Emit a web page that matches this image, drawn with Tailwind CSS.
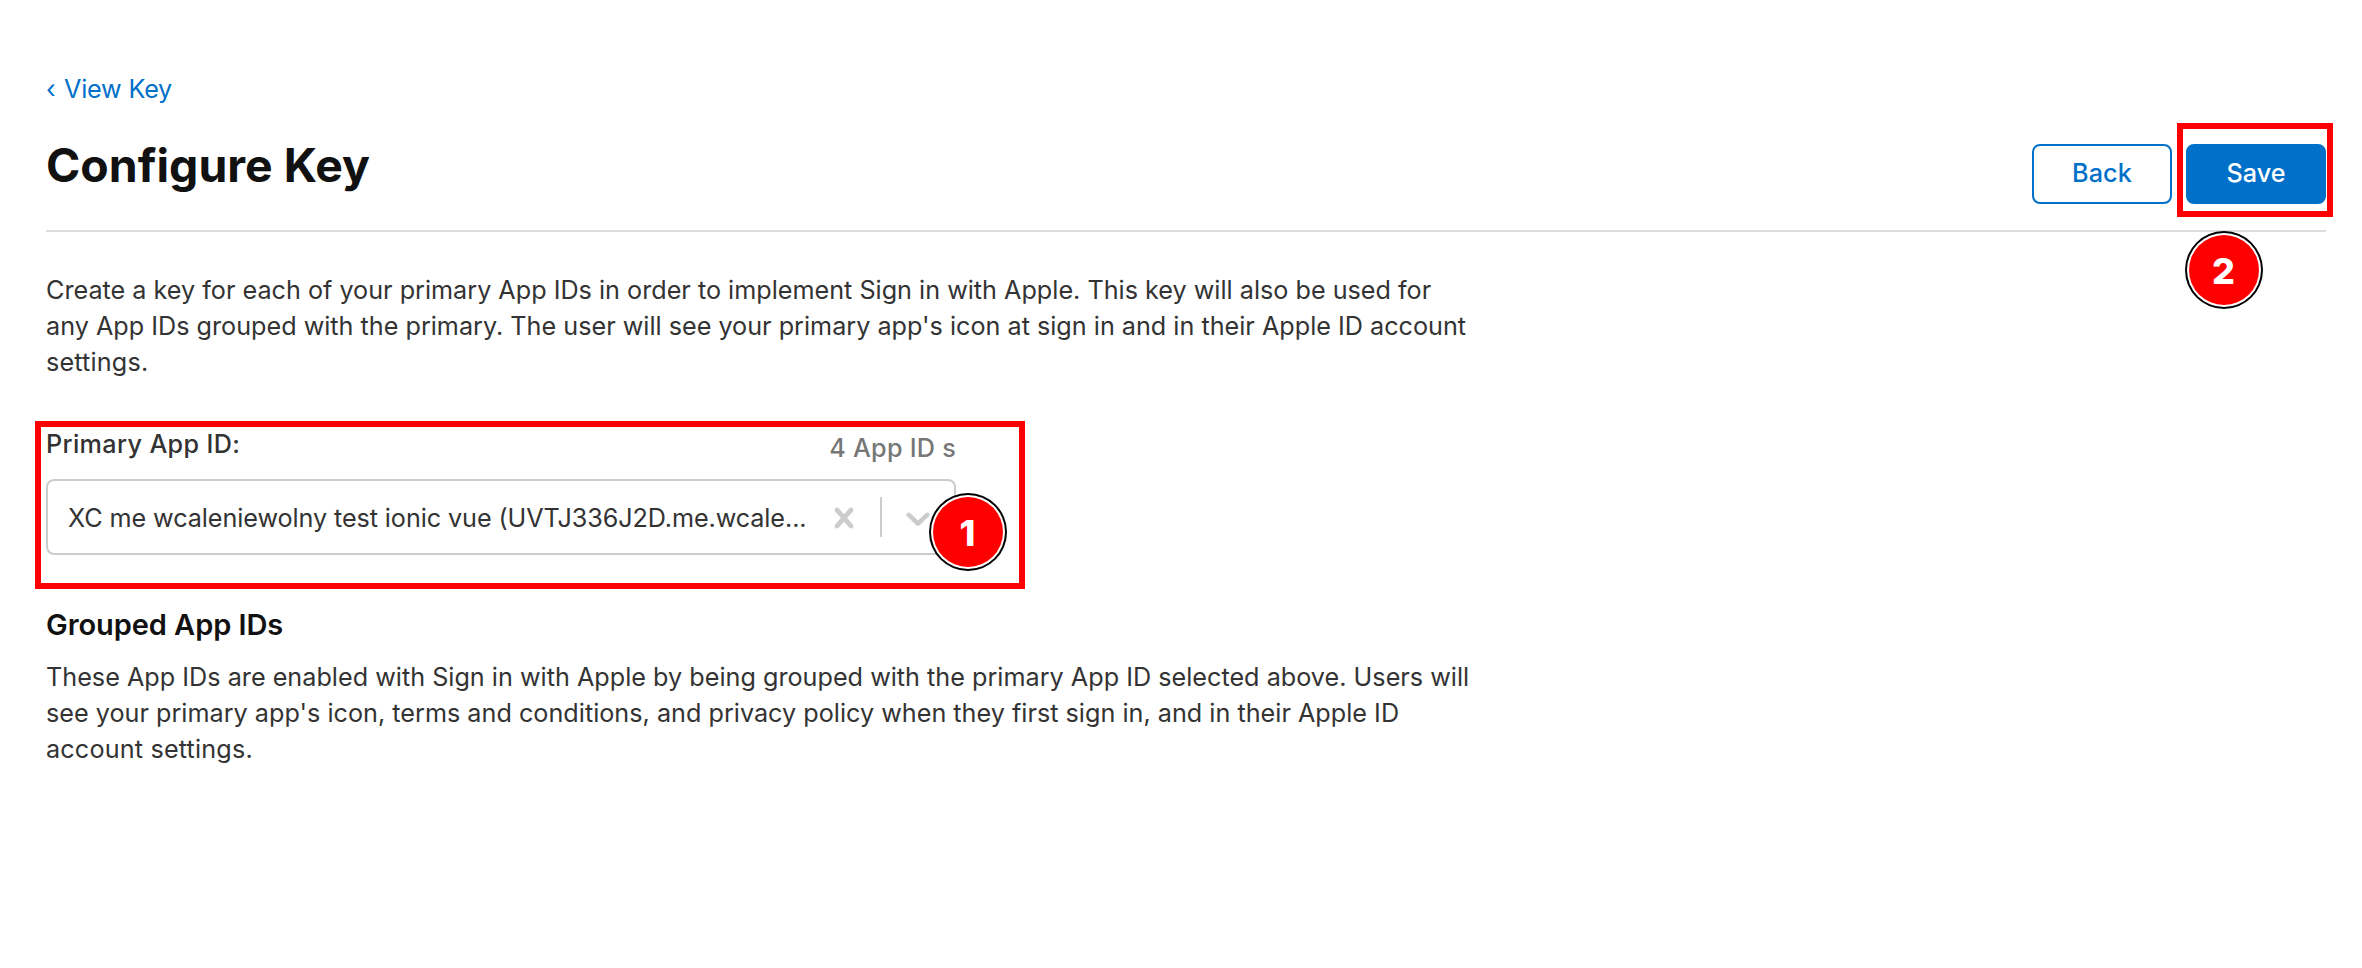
<!DOCTYPE html>
<html lang="en">
<head>
<meta charset="utf-8">
<title>Configure Key</title>
<script src="https://cdn.jsdelivr.net/npm/@tailwindcss/browser@4"></script>
</head>
<body class="relative h-[968px] overflow-hidden bg-white font-['Inter','Liberation_Sans',sans-serif] text-[25.2px] leading-9 text-[#333]">
  <main class="pt-[71px] pr-9 pl-[46px]">
    <a href="#" class="flex w-fit text-[#0070c9]"><span class="w-[18px]">‹</span><span class="tracking-[-0.2px]">View Key</span></a>

    <header class="mt-[30px] flex h-[95px] items-start justify-between border-b-2 border-[#ddd]">
      <h1 class="text-[46.4px] leading-[56px] font-bold text-[#111]">Configure Key</h1>
      <div class="mt-[7px] flex gap-[14px]">
        <button class="flex h-[60px] w-[140px] items-center justify-center rounded-lg border-2 border-[#0070c9] pb-[2px] font-[450] tracking-[0.15px] text-[#0070c9]">Back</button>
        <button class="flex h-[60px] w-[140px] items-center justify-center rounded-lg border-2 border-[#0070c9] bg-[#0070c9] pb-[2px] font-[450] tracking-[0.05px] text-white">Save</button>
      </div>
    </header>

    <p class="mt-10 whitespace-nowrap">Create a key for each of your primary App IDs in order to implement Sign in with Apple. This key will also be used for<br>any App IDs grouped with the primary. The user will see your primary app's icon at sign in and in their Apple ID account<br><span class="tracking-[0.17px]">settings.</span></p>

    <section class="mt-[46px] w-[910px]">
      <div class="flex h-[53px] justify-between">
        <label class="font-medium tracking-[0.35px]">Primary App ID:</label>
        <span class="mt-1 font-[450] tracking-[0.25px] text-[#777]">4 App ID s</span>
      </div>
      <div class="flex h-[76px] items-center rounded-lg border-2 border-[#ccc] pl-5">
        <span class="flex-1 pt-[2px] tracking-[-0.085px] whitespace-nowrap">XC me wcaleniewolny test ionic vue (UVTJ336J2D.me.wcale...</span>
        <svg class="mx-4 mt-[2px] size-10 shrink-0 fill-[#ccc]" viewBox="0 0 20 20"><path d="M14.348 14.849c-0.469 0.469-1.229 0.469-1.697 0l-2.651-3.030-2.651 3.029c-0.469 0.469-1.229 0.469-1.697 0-0.469-0.469-0.469-1.229 0-1.697l2.758-3.15-2.759-3.152c-0.469-0.469-0.469-1.228 0-1.697s1.228-0.469 1.697 0l2.652 3.031 2.651-3.031c0.469-0.469 1.228-0.469 1.697 0s0.469 1.229 0 1.697l-2.758 3.152 2.758 3.15c0.469 0.469 0.469 1.229 0 1.698z"/></svg>
        <span class="h-10 w-[2px] shrink-0 bg-[#ccc]"></span>
        <svg class="mx-4 mt-[2px] size-10 shrink-0 fill-[#ccc]" viewBox="0 0 20 20"><path d="M4.516 7.548c0.436-0.446 1.043-0.481 1.576 0l3.908 3.747 3.908-3.747c0.533-0.481 1.141-0.446 1.574 0 0.436 0.445 0.408 1.197 0 1.615-0.406 0.418-4.695 4.502-4.695 4.502-0.217 0.223-0.502 0.335-0.787 0.335s-0.57-0.112-0.789-0.335c0 0-4.287-4.084-4.695-4.502s-0.436-1.17 0-1.615z"/></svg>
      </div>
    </section>

    <h2 class="mt-[52px] text-[29px] leading-[35px] font-semibold tracking-[-0.07px] text-[#111]">Grouped App IDs</h2>
    <p class="mt-[17px] tracking-[0.009px] whitespace-nowrap">These App IDs are enabled with Sign in with Apple by being grouped with the primary App ID selected above. Users will<br>see your primary app's icon, terms and conditions, and privacy policy when they first sign in, and in their Apple ID<br><span class="tracking-[0.17px]">account settings.</span></p>
  </main>

  <!-- Step annotations laid over the page -->
  <div class="absolute top-[421px] left-[35px] h-[168px] w-[990px] border-6 border-[#f00]"></div>
  <div class="absolute top-[123px] left-[2177px] h-[94px] w-[156px] border-6 border-[#f00]"></div>
  <div class="absolute top-[493px] left-[929px] size-[78px] rounded-full bg-black p-[2px]">
    <div class="size-full rounded-full bg-white p-[2px]">
      <div class="flex size-full items-center justify-center rounded-full bg-[#f00] pt-px pr-px text-[36px] font-extrabold text-white">1</div>
    </div>
  </div>
  <div class="absolute top-[231px] left-[2185px] size-[78px] rounded-full bg-black p-[2px]">
    <div class="size-full rounded-full bg-white p-[2px]">
      <div class="flex size-full items-center justify-center rounded-full bg-[#f00] pt-px pr-px text-[36px] font-extrabold text-white">2</div>
    </div>
  </div>
</body>
</html>
